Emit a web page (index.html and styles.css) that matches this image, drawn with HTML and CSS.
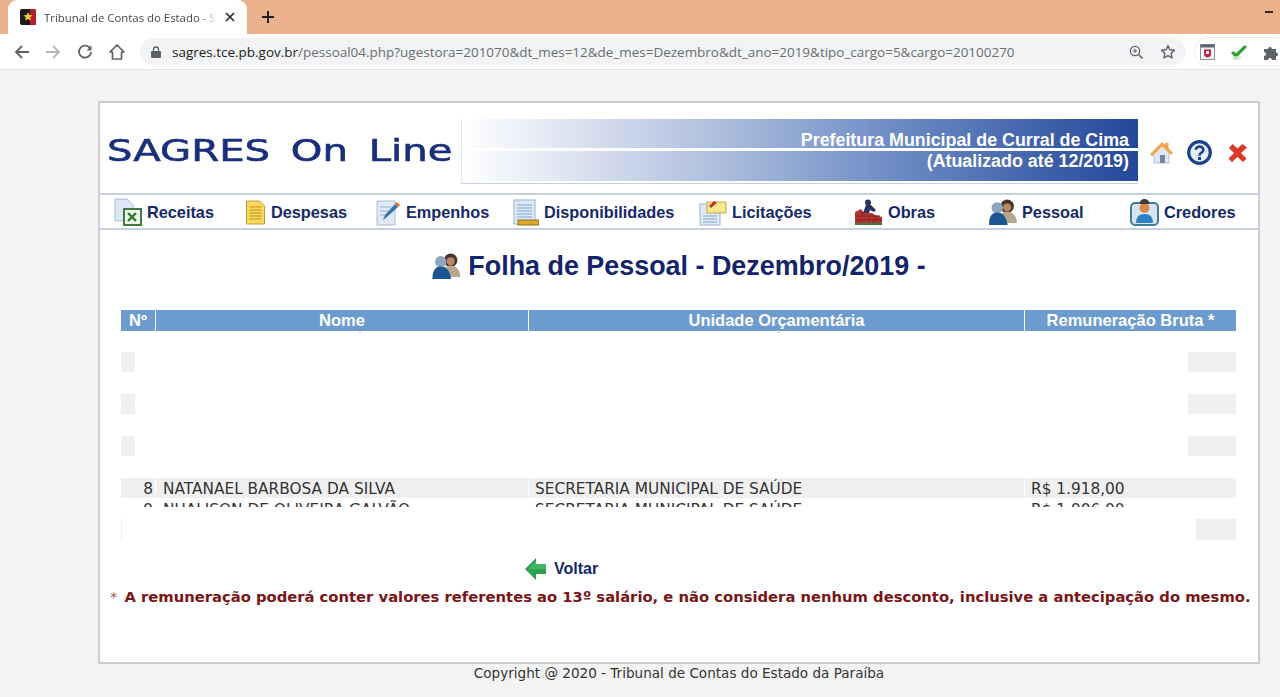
FILE: index.html
```html
<!DOCTYPE html>
<html lang="pt-BR">
<head>
  <meta charset="UTF-8">
  <title>Tribunal de Contas do Estado - SAGRES</title>
  <link rel="stylesheet" href="styles.css">
</head>
<body>

<!-- Barra de abas -->
<div class="tabstrip">
  <div class="tab">
    <svg class="favicon" width="16" height="16" viewBox="0 0 16 16"><rect width="16" height="16" rx="2" fill="#1c1a1c"/><path d="M10 0h4a2 2 0 0 1 2 2v14h-6z" fill="#b3202a"/><path d="M8 3l1.400 3 3.200.3-2.400 2.100.8 3.200L8 10l-2.900 1.600.8-3.200-2.400-2.100 3.200-.3z" fill="#f4c92f"/></svg>
    <span class="tab-title">Tribunal de Contas do Estado - S</span>
    <svg class="tab-close" width="10" height="10" viewBox="0 0 10 10"><path d="M1 1l8 8M9 1l-8 8" stroke="#222" stroke-width="1.600"/></svg>
  </div>
  <svg class="new-tab" width="14" height="14" viewBox="0 0 14 14"><path d="M7 1v12M1 7h12" stroke="#222" stroke-width="2"/></svg>
  <span class="win-min"></span>
</div>

<!-- Barra de endereço -->
<div class="toolbar">
  <svg class="tool" width="16" height="16" viewBox="0 0 16 16"><path d="M15 8H2M8 2L2 8l6 6" fill="none" stroke="#5f6368" stroke-width="1.800"/></svg>
  <svg class="tool forward" width="16" height="16" viewBox="0 0 16 16"><path d="M1 8h13M8 2l6 6-6 6" fill="none" stroke="#b4b7bb" stroke-width="1.800"/></svg>
  <svg class="tool" width="16" height="16" viewBox="0 0 16 16"><path d="M13.500 5.200A6 6 0 1 0 14 8" fill="none" stroke="#5f6368" stroke-width="1.800"/><path d="M14.500 1.500v5h-5z" fill="#5f6368"/></svg>
  <svg class="tool home" width="18" height="18" viewBox="0 0 18 18"><path d="M9 2L2 9h2.500v7h9V9H16z" fill="none" stroke="#5f6368" stroke-width="1.700" stroke-linejoin="round"/></svg>
  <div class="omnibox">
    <svg width="10" height="12" viewBox="0 0 10 12"><path d="M2.500 5V3.500a2.500 2.500 0 0 1 5 0V5" fill="none" stroke="#5f6368" stroke-width="1.300"/><rect y="5" width="10" height="7" rx="1" fill="#5f6368"/></svg>
    <span class="url"><b>sagres.tce.pb.gov.br</b>/pessoal04.php?ugestora=201070&amp;dt_mes=12&amp;de_mes=Dezembro&amp;dt_ano=2019&amp;tipo_cargo=5&amp;cargo=20100270</span>
    <svg class="zoom-ic" width="14" height="14" viewBox="0 0 14 14"><circle cx="6" cy="6" r="4.600" fill="none" stroke="#5f6368" stroke-width="1.300"/><path d="M9.500 9.500L13.500 13.500" stroke="#5f6368" stroke-width="1.600"/><path d="M6 3.800v4.400M3.800 6h4.400" stroke="#5f6368"/></svg>
    <svg class="star-ic" width="16" height="16" viewBox="0 0 16 16"><path d="M8 1.600l1.900 4.200 4.600.5-3.400 3.100.9 4.600L8 11.700 4 14l.9-4.600L1.500 6.300l4.600-.5z" fill="none" stroke="#5f6368" stroke-width="1.400" stroke-linejoin="round"/></svg>
  </div>
  <div class="extensions">
    <svg width="15" height="16" viewBox="0 0 15 16"><rect x=".5" y=".5" width="14" height="15" fill="#f2f4f6" stroke="#8d9399"/><rect x=".5" y=".5" width="14" height="3" fill="#5c6670"/><path d="M4 5.500h7V10q0 2.500-3.500 3.500Q4 12.500 4 10z" fill="#c2203a"/><rect x="6" y="7" width="3" height="3" fill="#fff"/></svg>
    <svg width="18" height="16" viewBox="0 0 18 16"><path d="M1 9l5 5L17 3l-2.500-2L6 9.500 3.500 7z" fill="#2f9e2f"/><rect x="3" y="12" width="8" height="4" fill="#c9e4c9" opacity=".7"/></svg>
    <svg width="16" height="16" viewBox="0 0 16 16"><path d="M1 5h4a2 2 0 1 1 4 0h4v3.500a2 2 0 1 1 0 4V16H9a2 2 0 1 0-4 0H1v-4a2 2 0 1 0 0-4z" fill="#5f6368"/></svg>
  </div>
</div>

<!-- Conteúdo da página -->
<div class="page">
  <div class="panel">

    <div class="head">
      <div class="logo"><span class="logo-text">SAGRES&nbsp; On&nbsp; Line</span></div>
      <div class="banner">
        <div class="stripe">Prefeitura Municipal de Curral de Cima</div>
        <div class="stripe">(Atualizado até 12/2019)</div>
      </div>
      <div class="head-icons">
        <svg width="23" height="22" viewBox="0 0 23 22"><path d="M4 10v11h15V10L12 3z" fill="#dfe8f2" stroke="#b4c2d2"/><path d="M0 12L12 0l3 2.500V1h3.500v5l4.500 5-2 2-9-8.500L2 14.500z" fill="#f0a650"/><rect x="10" y="13" width="5" height="8" fill="#6f86a5"/></svg>
        <svg width="25" height="25" viewBox="0 0 25 25"><circle cx="12.500" cy="12.500" r="10.800" fill="#e6eef9" stroke="#1c3f8e" stroke-width="3.200"/><path d="M8.800 9.800a3.800 3.300 0 1 1 5.700 2.900c-1.400.8-2 1.400-2 3" fill="none" stroke="#1c3f8e" stroke-width="2.600"/><rect x="11" y="17" width="3" height="3" fill="#1c3f8e"/></svg>
        <svg width="19" height="18" viewBox="0 0 19 18"><path d="M1 4l3.500-4 5 4.500L14.500 0 19 3.500 13 9l5.500 5.500-3.500 3.500-5.500-5L4 18l-3.500-3.500L6 9z" fill="#d93a28"/></svg>
      </div>
    </div>

    <div class="nav">
      <a class="nav-item">
        <svg width="28" height="28" viewBox="0 0 28 28"><path d="M1 1h12l6 6v16H1z" fill="#dbe7f5" stroke="#a9bdd6"/><rect x="10" y="11" width="17" height="16" fill="#eef6ea" stroke="#3f7a3f" stroke-width="2"/><path d="M14 15l8 8M22 15l-8 8" stroke="#2c7a35" stroke-width="2.400"/></svg>
        Receitas
      </a>
      <a class="nav-item">
        <svg width="21" height="25" viewBox="0 0 20 25"><path d="M1 1h13l5 5v18H1z" fill="#f7d95c" stroke="#b99a3a"/><path d="M4 7h12M4 10h12M4 13h12M4 16h12M4 19h12" stroke="#c48f1f" stroke-width="1.200"/></svg>
        Despesas
      </a>
      <a class="nav-item">
        <svg width="25" height="27" viewBox="0 0 25 27"><path d="M1 2h18v24H1z" fill="#dde9f6" stroke="#a9bdd6"/><path d="M4 8h11M4 12h9M4 16h7" stroke="#9fb2c8"/><path d="M7 21l2-5L19 5l3 3-11 10z" fill="#3f6fb0"/><path d="M19 5l2-2 3 3-2 2z" fill="#e2662f"/></svg>
        Empenhos
      </a>
      <a class="nav-item">
        <svg width="26" height="27" viewBox="0 0 26 27"><rect x="1" y="1" width="21" height="24" fill="#dde9f6" stroke="#9db2cc"/><path d="M4 6h15M4 9h15M4 12h15M4 15h15M4 18h15" stroke="#7fa5d0"/><rect x="5" y="21" width="21" height="5" fill="#d6ab2d" stroke="#8f7420"/></svg>
        Disponibilidades
      </a>
      <a class="nav-item">
        <svg width="28" height="27" viewBox="0 0 28 27"><rect x="1" y="5" width="20" height="21" fill="#dde9f6" stroke="#9db2cc"/><path d="M4 17h14M4 20h14M4 23h14" stroke="#7fa5d0"/><path d="M8 3h19v11H8z" fill="#f8e88e" stroke="#c7a93a"/><path d="M10 7l5-5 3 2-6 5z" fill="#b93a2c"/></svg>
        Licitações
      </a>
      <a class="nav-item">
        <svg width="29" height="26" viewBox="0 0 27 26"><path d="M0 25V13l6-3 3 4h8l3 2 7 2v7z" fill="#b5342f"/><path d="M1 17h24M1 21h25M7 13v4M14 17v4M21 17v4M6 21v4M18 21v4" stroke="#7d2622"/><circle cx="13" cy="3.500" r="3" fill="#27345c"/><path d="M8 14l3-8h5l5 5-2 2-4-2-1 3z" fill="#27345c"/><rect y="24" width="27" height="2" fill="#3f7a3f"/></svg>
        Obras
      </a>
      <a class="nav-item">
        <svg width="28" height="26" viewBox="0 0 27 25"><circle cx="17.500" cy="7" r="6.500" fill="#4a3628"/><circle cx="17.500" cy="8" r="3.800" fill="#b98a68"/><path d="M9 23q0-11 8.500-11T27 23z" fill="#b7a78e"/><circle cx="8" cy="8.500" r="5.500" fill="#8fa6c0"/><path d="M0 25q0-12 8-12t10 12z" fill="#1d5592"/></svg>
        Pessoal
      </a>
      <a class="nav-item">
        <svg width="29" height="27" viewBox="0 0 29 27"><rect x="1" y="4" width="27" height="22" rx="4" fill="#d7e4f0" stroke="#3f7f96" stroke-width="2"/><circle cx="14.500" cy="9" r="5" fill="#d9874a"/><path d="M9.500 5a5 5 0 0 1 10 0z" fill="#3a3a3a"/><path d="M6 24q0-9 8.500-9T23 24z" fill="#2f7fc0"/></svg>
        Credores
      </a>
    </div>

    <h1 class="title">
      <svg width="29" height="26" viewBox="0 0 27 25"><circle cx="17.500" cy="7" r="6.500" fill="#4a3628"/><circle cx="17.500" cy="8" r="3.800" fill="#b98a68"/><path d="M9 23q0-11 8.500-11T27 23z" fill="#b7a78e"/><circle cx="8" cy="8.500" r="5.500" fill="#8fa6c0"/><path d="M0 25q0-12 8-12t10 12z" fill="#1d5592"/></svg>
      Folha de Pessoal - Dezembro/2019 -
    </h1>

    <div class="table">
      <div class="row header">
        <div>Nº</div>
        <div>Nome</div>
        <div>Unidade Orçamentária</div>
        <div>Remuneração Bruta *</div>
      </div>
      <div class="row spacer">
        <div></div>
        <div><i class="tick tick-nome"></i></div>
        <div><i class="tick tick-unidade"></i></div>
        <div></div>
      </div>
      <div class="stub-row"><span class="stub"></span><span class="stub stub-r"></span></div>
      <div class="blank"></div>
      <div class="stub-row"><span class="stub"></span><span class="stub stub-r"></span></div>
      <div class="blank"></div>
      <div class="stub-row"><span class="stub"></span><span class="stub stub-r"></span></div>
      <div class="blank"></div>
      <div class="row data shaded">
        <div class="num">8</div>
        <div>NATANAEL BARBOSA DA SILVA</div>
        <div>SECRETARIA MUNICIPAL DE SAÚDE</div>
        <div>R$ 1.918,00</div>
      </div>
      <div class="row data clipped">
        <div class="num">9</div>
        <div>NUALISON DE OLIVEIRA GALVÃO</div>
        <div>SECRETARIA MUNICIPAL DE SAÚDE</div>
        <div>R$ 1.906,00</div>
      </div>
      <div class="stub-row last"><span class="stub stub-thin"></span><span class="stub stub-s"></span></div>
    </div>

    <div class="back">
      <svg width="21" height="22" viewBox="0 0 21 22"><path d="M11 0L0 11l11 11v-6h10V6H11z" fill="#2fa04f"/><path d="M11 3L3 11h18V6H11z" fill="#4cc26b" opacity=".7"/></svg>
      <a>Voltar</a>
    </div>

    <p class="note"><span class="star">*</span><b>A remuneração poderá conter valores referentes ao 13º salário, e não considera nenhum desconto, inclusive a antecipação do mesmo.</b></p>

  </div>
  <div class="copy">Copyright @ 2020 - Tribunal de Contas do Estado da Paraíba</div>
</div>

</body>
</html>
```

FILE: styles.css
```css
body {
  margin: 0;
  height: 697px;
  overflow: hidden;
  background-color: #f3f3f3;
  font-family: "Liberation Sans", Arial, sans-serif;
}

/* Navegador */
.tabstrip {
  display: flex;
  align-items: center;
  height: 34px;
  background-color: #ebb08c;
}
.tab {
  display: flex;
  align-items: center;
  align-self: stretch;
  width: 239px;
  margin-left: 8px;
  padding-left: 12px;
  box-sizing: border-box;
  background: #fff;
  border-radius: 9px 9px 0 0;
}
.tab-title {
  width: 173px;
  margin-left: 8px;
  overflow: hidden;
  white-space: nowrap;
  font: 11.4px "Open Sans", sans-serif;
  color: #45484c;
  -webkit-mask-image: linear-gradient(to right, #000 90%, transparent);
  mask-image: linear-gradient(to right, #000 90%, transparent);
}
.tab-close {
  margin-left: 8px;
}
.new-tab {
  margin-left: 14px;
}
.win-min {
  width: 8px;
  height: 2px;
  margin: 0 7px 11px auto;
  background: #33251b;
}
.toolbar {
  display: flex;
  align-items: center;
  height: 35px;
  padding: 0 0 0 14px;
  background: #fff;
  border-bottom: 1px solid #e3e3e3;
}
.tool {
  margin-right: 15px;
}
.tool.forward {
  margin-right: 16px;
}
.tool.home {
  margin-right: 14px;
}
.omnibox {
  display: flex;
  align-items: center;
  width: 1046px;
  height: 27px;
  padding-left: 11px;
  box-sizing: border-box;
  background: #f1f3f4;
  border-radius: 14px;
}
.url {
  width: 957px;
  margin-left: 11px;
  white-space: nowrap;
  font: 13.47px "Open Sans", sans-serif;
  color: #6a6e73;
}
.url b {
  font-weight: normal;
  color: #202124;
}
.star-ic {
  margin-left: 17px;
}
.extensions {
  display: flex;
  align-items: center;
  gap: 15px;
  height: 27px;
  margin-left: 8px;
  padding-left: 5px;
  border: 1px solid #eee;
  border-right: none;
  border-radius: 14px 0 0 14px;
}

/* Painel */
.page {
  padding: 31px 0 0 98px;
}
.panel {
  width: 1158px;
  height: 559px;
  background: #fff;
  border: 2px solid #cdcdcd;
}
.head {
  display: flex;
  height: 90px;
  padding-top: 16px;
  box-sizing: border-box;
}
.logo {
  width: 361px;
  height: 63px;
  display: flex;
  align-items: center;
  padding-left: 7px;
  box-sizing: border-box;
  overflow: hidden;
}
.logo-text {
  display: inline-block;
  transform: scaleX(1.34);
  transform-origin: left center;
  white-space: nowrap;
  word-spacing: -1.8px;
  font: 30px "DejaVu Sans", sans-serif;
  color: #1a2f7c;
  -webkit-text-stroke: .6px #1a2f7c;
}
.banner {
  width: 677px;
  height: 65px;
  border-left: 1px solid #e2e6ee;
  border-bottom: 1px solid #c4d0e0;
  box-sizing: border-box;
}
.stripe {
  height: 29px;
  padding-right: 9px;
  margin-bottom: 3px;
  text-align: right;
  font-weight: bold;
  font-size: 17.85px;
  line-height: 42px;
  color: #fff;
  background: linear-gradient(to right, #fff, #b4c3e0 35%, #6f8dc5 63%, #23479a);
}
.stripe + .stripe {
  height: 30px;
  line-height: 20px;
  margin-bottom: 0;
}
.head-icons {
  display: flex;
  align-items: center;
  gap: 14px;
  height: 67px;
  padding-left: 12px;
}
.head-icons svg:last-child {
  margin-left: 2px;
}
.nav {
  display: grid;
  grid-template-columns: 131px 131px 137px 186px 155px 135px 141px 1fr;
  height: 32px;
  padding: 1px 0 0 14px;
  border-top: 2px solid #c6d0e0;
  border-bottom: 2px solid #c6d0e0;
  align-items: center;
}
.nav-item {
  display: flex;
  align-items: center;
  gap: 5px;
  font-weight: bold;
  font-size: 16.3px;
  color: #14286b;
}
.title {
  display: flex;
  align-items: center;
  justify-content: center;
  gap: 7px;
  height: 34px;
  margin: 19px 0 27px;
  font-size: 26.9px;
  color: #13246a;
}

/* Tabela */
.table {
  width: 1115px;
  margin-left: 21px;
}
.row {
  display: grid;
  grid-template-columns: 34px 372px 495px 211px;
  column-gap: 1px;
}
.header {
  height: 21px;
  line-height: 21px;
  text-align: center;
  font-weight: bold;
  font-size: 16.5px;
  color: #fff;
}
.header div {
  background: #6c9bcf;
}
.spacer {
  height: 21px;
}
.tick {
  display: block;
  width: 2px;
  height: 1px;
  margin-top: 1px;
  background: #bbb;
}
.tick-nome {
  margin-left: 203px;
}
.tick-unidade {
  margin-left: 249px;
}
.stub-row {
  display: flex;
  justify-content: space-between;
  height: 20px;
}
.stub {
  width: 14px;
  background: #efefef;
}
.stub-r {
  width: 48px;
}
.stub-s {
  width: 40px;
}
.stub-thin {
  width: 1px;
}
.blank {
  height: 22px;
}
.data {
  grid-template-rows: 20px;
  font: 15.35px/20px "DejaVu Sans", sans-serif;
  color: #333;
  white-space: nowrap;
}
.data div {
  padding: 1px 0 0 6px;
  box-sizing: border-box;
}
.data div:nth-child(2) {
  padding-left: 7px;
}
.data .num {
  padding: 1px 2px 0 0;
  text-align: right;
}
.shaded {
  height: 20px;
  margin-bottom: 1px;
}
.shaded div {
  background: #efefef;
}
.clipped {
  height: 8px;
  margin-bottom: 12px;
  overflow: hidden;
}
.last {
  height: 21px;
}

.back {
  display: flex;
  align-items: center;
  gap: 8px;
  margin: 18px 0 0 425px;
  font-weight: bold;
  font-size: 16px;
  color: #14286b;
}
.note {
  margin: 7px 0 0 10px;
  white-space: nowrap;
  font: 14.77px/20px "DejaVu Sans", sans-serif;
  color: #7b1416;
}
.star {
  margin-right: 7px;
  color: #a3585a;
}
.copy {
  width: 1162px;
  margin-top: 1px;
  text-align: center;
  font: 13.57px/16px "DejaVu Sans", sans-serif;
  color: #333;
}
```
